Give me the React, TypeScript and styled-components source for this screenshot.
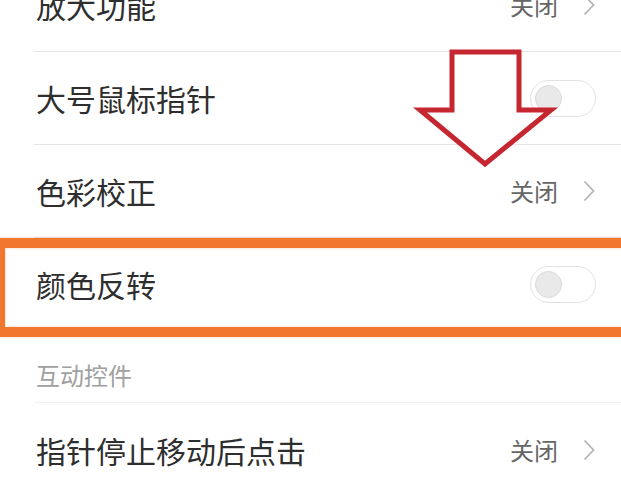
import React from "react";
import styled, { createGlobalStyle, css } from "styled-components";

const GlobalStyle = createGlobalStyle`
  html, body {
    margin: 0;
    padding: 0;
    background: #ffffff;
  }
  body {
    font-family: "Noto Sans CJK SC", "Noto Sans", sans-serif;
    overflow: hidden;
  }
`;

const Page = styled.div`
  position: relative;
  width: 100vw;
  height: 100vh;
  overflow: hidden;
  background: #ffffff;
`;

const List = styled.div`
  display: flex;
  flex-direction: column;
  margin-top: -41px;
`;

const Row = styled.div<{ $highlighted?: boolean }>`
  position: relative;
  box-sizing: border-box;
  height: 93px;
  margin-left: 34px;
  padding-right: 25px;
  display: flex;
  align-items: center;
  justify-content: space-between;
  border-bottom: 1px solid #e4e4e4;

  &:last-child {
    border-bottom: none;
  }

  ${(p) =>
    p.$highlighted &&
    css`
      &::after {
        content: "";
        position: absolute;
        top: 0;
        left: -39px;
        right: -40px;
        bottom: -7px;
        border: 10px solid #f1772e;
        box-shadow: 0 0 2px 1px rgba(241, 119, 46, 0.18),
          inset 0 0 2px 1px rgba(241, 119, 46, 0.18);
        pointer-events: none;
        z-index: 2;
      }
    `}
`;

const Label = styled.span`
  font-size: 30px;
  line-height: 1;
  color: #2e2e2e;
  padding-left: 2px;
`;

const Trailing = styled.div`
  display: flex;
  align-items: center;
  gap: 25px;
`;

const Value = styled.span`
  font-size: 24px;
  line-height: 1;
  color: #666666;
`;

const Chevron = styled.svg`
  width: 12px;
  height: 22px;
  margin-right: 1px;
`;

const Toggle = styled.div`
  box-sizing: border-box;
  width: 66px;
  height: 37px;
  border-radius: 19px;
  border: 1.5px solid #e2e2e2;
  background: #ffffff;
  display: flex;
  align-items: center;
  padding-left: 4px;
`;

const Knob = styled.div`
  box-sizing: border-box;
  width: 27px;
  height: 27px;
  border-radius: 50%;
  background: #e9e9e9;
  border: 1px solid #d9d9d9;
`;

const SectionHeader = styled.div`
  box-sizing: border-box;
  height: 72px;
  margin-left: 34px;
  padding: 0 0 15px 2px;
  display: flex;
  align-items: flex-end;
  justify-content: flex-start;
  border-bottom: 1px solid #f1f1f1;
  font-size: 24px;
  line-height: 24px;
  color: #a0a0a0;
`;

const Arrow = styled.svg`
  position: absolute;
  top: 40px;
  left: 410px;
  width: 150px;
  height: 135px;
  z-index: 3;
`;

type Item =
  | { kind: "link"; label: string; value: string; highlighted?: boolean }
  | { kind: "switch"; label: string; highlighted?: boolean }
  | { kind: "header"; label: string };

const items: Item[] = [
  { kind: "link", label: "放大功能", value: "关闭" },
  { kind: "switch", label: "大号鼠标指针" },
  { kind: "link", label: "色彩校正", value: "关闭" },
  { kind: "switch", label: "颜色反转", highlighted: true },
  { kind: "header", label: "互动控件" },
  { kind: "link", label: "指针停止移动后点击", value: "关闭" },
];

function ChevronIcon() {
  return (
    <Chevron viewBox="0 0 12 22">
      <polyline
        points="1.5,1.5 10.5,11 1.5,20.5"
        fill="none"
        stroke="#b5b5b5"
        strokeWidth="1.8"
        strokeLinejoin="miter"
      />
    </Chevron>
  );
}

export default function App() {
  return (
    <Page>
      <GlobalStyle />
      <List>
        {items.map((item) => {
          if (item.kind === "header") {
            return <SectionHeader key={item.label}>{item.label}</SectionHeader>;
          }
          return (
            <Row key={item.label} $highlighted={item.highlighted}>
              <Label>{item.label}</Label>
              {item.kind === "link" ? (
                <Trailing>
                  <Value>{item.value}</Value>
                  <ChevronIcon />
                </Trailing>
              ) : (
                <Toggle>
                  <Knob />
                </Toggle>
              )}
            </Row>
          );
        })}
      </List>
      {/* red annotation arrow pointing at the highlighted row */}
      <Arrow viewBox="0 0 150 135">
        <polygon
          points="42,12 109,12 109,70 141,70 75,124 10,70 42,70"
          fill="#ffffff"
          stroke="#c5262f"
          strokeWidth="5"
          strokeLinejoin="miter"
        />
      </Arrow>
    </Page>
  );
}
